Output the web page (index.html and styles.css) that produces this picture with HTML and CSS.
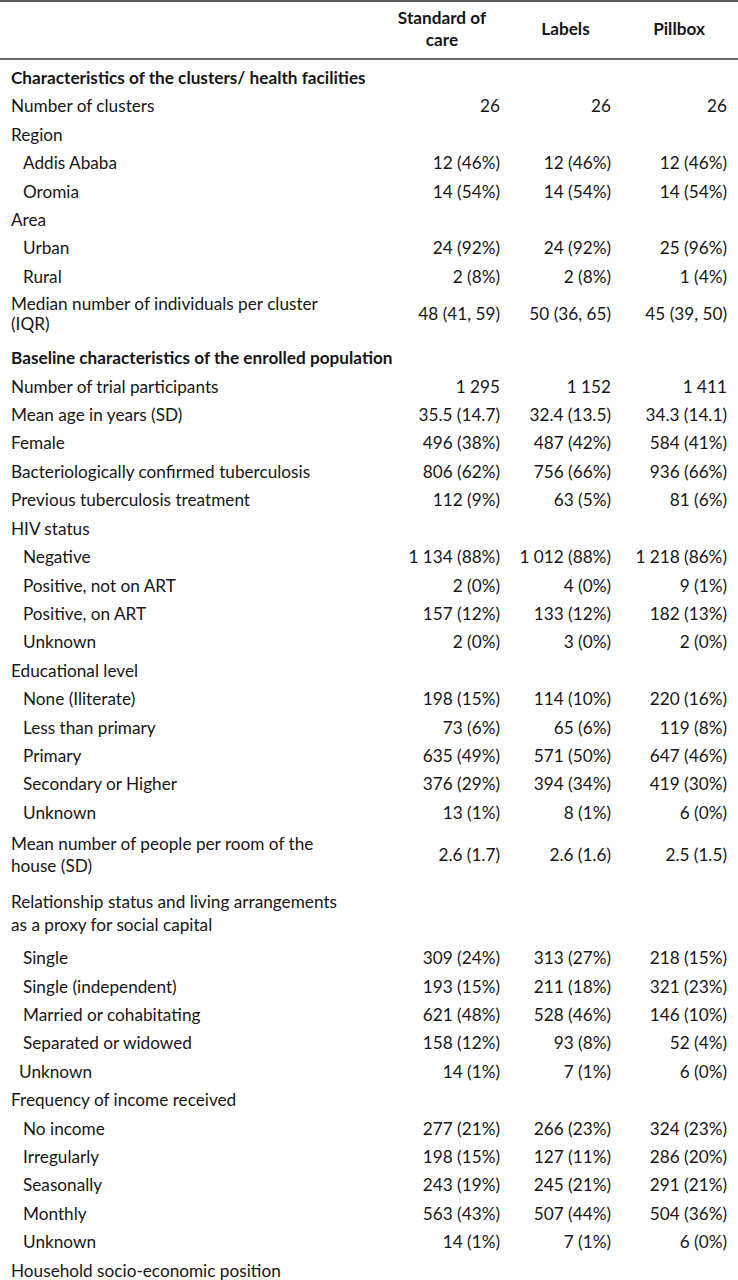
FILE: index.html
```html
<!DOCTYPE html>
<html lang="en">
<head>
<meta charset="utf-8">
<title>Baseline characteristics</title>
<link rel="stylesheet" href="styles.css">
</head>
<body>
<table class="tbl">
  <colgroup>
    <col class="c-label">
    <col class="c-soc">
    <col class="c-lab">
    <col class="c-pill">
  </colgroup>
  <thead>
    <tr class="head">
      <th></th>
      <th>Standard of<br>care</th>
      <th>Labels</th>
      <th>Pillbox</th>
    </tr>
  </thead>
  <tbody>
    <tr class="section first"><td colspan="4">Characteristics of the clusters/ health facilities</td></tr>
    <tr><td>Number of clusters</td><td>26</td><td>26</td><td>26</td></tr>
    <tr><td>Region</td><td></td><td></td><td></td></tr>
    <tr><td class="ind">Addis Ababa</td><td>12 (46%)</td><td>12 (46%)</td><td>12 (46%)</td></tr>
    <tr><td class="ind">Oromia</td><td>14 (54%)</td><td>14 (54%)</td><td>14 (54%)</td></tr>
    <tr><td>Area</td><td></td><td></td><td></td></tr>
    <tr><td class="ind">Urban</td><td>24 (92%)</td><td>24 (92%)</td><td>25 (96%)</td></tr>
    <tr><td class="ind">Rural</td><td>2 (8%)</td><td>2 (8%)</td><td>1 (4%)</td></tr>
    <tr class="multi m1"><td>Median number of individuals per cluster<br>(IQR)</td><td>48 (41, 59)</td><td>50 (36, 65)</td><td>45 (39, 50)</td></tr>
    <tr class="section"><td colspan="4">Baseline characteristics of the enrolled population</td></tr>
    <tr><td>Number of trial participants</td><td>1 295</td><td>1 152</td><td>1 411</td></tr>
    <tr><td>Mean age in years (SD)</td><td>35.5 (14.7)</td><td>32.4 (13.5)</td><td>34.3 (14.1)</td></tr>
    <tr><td>Female</td><td>496 (38%)</td><td>487 (42%)</td><td>584 (41%)</td></tr>
    <tr><td>Bacteriologically confirmed tuberculosis</td><td>806 (62%)</td><td>756 (66%)</td><td>936 (66%)</td></tr>
    <tr><td>Previous tuberculosis treatment</td><td>112 (9%)</td><td>63 (5%)</td><td>81 (6%)</td></tr>
    <tr><td>HIV status</td><td></td><td></td><td></td></tr>
    <tr><td class="ind">Negative</td><td>1 134 (88%)</td><td>1 012 (88%)</td><td>1 218 (86%)</td></tr>
    <tr><td class="ind">Positive, not on ART</td><td>2 (0%)</td><td>4 (0%)</td><td>9 (1%)</td></tr>
    <tr><td class="ind">Positive, on ART</td><td>157 (12%)</td><td>133 (12%)</td><td>182 (13%)</td></tr>
    <tr><td class="ind">Unknown</td><td>2 (0%)</td><td>3 (0%)</td><td>2 (0%)</td></tr>
    <tr><td>Educational level</td><td></td><td></td><td></td></tr>
    <tr><td class="ind">None (Iliterate)</td><td>198 (15%)</td><td>114 (10%)</td><td>220 (16%)</td></tr>
    <tr><td class="ind">Less than primary</td><td>73 (6%)</td><td>65 (6%)</td><td>119 (8%)</td></tr>
    <tr><td class="ind">Primary</td><td>635 (49%)</td><td>571 (50%)</td><td>647 (46%)</td></tr>
    <tr><td class="ind">Secondary or Higher</td><td>376 (29%)</td><td>394 (34%)</td><td>419 (30%)</td></tr>
    <tr><td class="ind">Unknown</td><td>13 (1%)</td><td>8 (1%)</td><td>6 (0%)</td></tr>
    <tr class="multi m2"><td>Mean number of people per room of the<br>house (SD)</td><td>2.6 (1.7)</td><td>2.6 (1.6)</td><td>2.5 (1.5)</td></tr>
    <tr class="multi m3"><td>Relationship status and living arrangements<br>as a proxy for social capital</td><td></td><td></td><td></td></tr>
    <tr><td class="ind">Single</td><td>309 (24%)</td><td>313 (27%)</td><td>218 (15%)</td></tr>
    <tr><td class="ind">Single (independent)</td><td>193 (15%)</td><td>211 (18%)</td><td>321 (23%)</td></tr>
    <tr><td class="ind">Married or cohabitating</td><td>621 (48%)</td><td>528 (46%)</td><td>146 (10%)</td></tr>
    <tr><td class="ind">Separated or widowed</td><td>158 (12%)</td><td>93 (8%)</td><td>52 (4%)</td></tr>
    <tr><td class="ind-s">Unknown</td><td>14 (1%)</td><td>7 (1%)</td><td>6 (0%)</td></tr>
    <tr><td>Frequency of income received</td><td></td><td></td><td></td></tr>
    <tr><td class="ind">No income</td><td>277 (21%)</td><td>266 (23%)</td><td>324 (23%)</td></tr>
    <tr><td class="ind">Irregularly</td><td>198 (15%)</td><td>127 (11%)</td><td>286 (20%)</td></tr>
    <tr><td class="ind">Seasonally</td><td>243 (19%)</td><td>245 (21%)</td><td>291 (21%)</td></tr>
    <tr><td class="ind">Monthly</td><td>563 (43%)</td><td>507 (44%)</td><td>504 (36%)</td></tr>
    <tr><td class="ind">Unknown</td><td>14 (1%)</td><td>7 (1%)</td><td>6 (0%)</td></tr>
    <tr><td>Household socio-economic position</td><td></td><td></td><td></td></tr>
  </tbody>
</table>
</body>
</html>
```

FILE: styles.css
```css
html, body {
  margin: 0;
  padding: 0;
  background: #ffffff;
}

body {
  font-family: Lato, "Open Sans", "Liberation Sans", sans-serif;
  font-size: 17.2px;
  color: #161616;
}

.tbl {
  width: 738px;
  border-collapse: collapse;
  table-layout: fixed;
}

.c-label { width: 375px; }
.c-soc { width: 136px; }
.c-lab { width: 111px; }
.c-pill { width: 116px; }

.head th {
  border-top: 2px solid #5a5a5a;
  border-bottom: 2px solid #6a6a6a;
  font-weight: 700;
  text-align: center;
  line-height: 22px;
  padding: 5px 11px 7px 9px;
  vertical-align: middle;
}

.tbl td {
  padding: 4px 11px 4px 0;
  line-height: 20.4px;
  text-align: right;
  white-space: nowrap;
  vertical-align: middle;
}

.tbl td:first-child {
  text-align: left;
  padding-left: 11px;
}

.tbl td.ind {
  padding-left: 23px;
}

.tbl td.ind-s {
  padding-left: 19px;
}

.section td {
  font-weight: 700;
  padding-top: 10px;
  padding-bottom: 4px;
}

.section.first td {
  padding-top: 8px;
}

.m1 td {
  line-height: 19.5px;
  padding-top: 3px;
  padding-bottom: 5px;
}

.m2 td {
  line-height: 22px;
  padding-top: 6px;
  padding-bottom: 4px;
}

.m3 td {
  line-height: 22.5px;
  padding-top: 10px;
  padding-bottom: 8px;
}
```
